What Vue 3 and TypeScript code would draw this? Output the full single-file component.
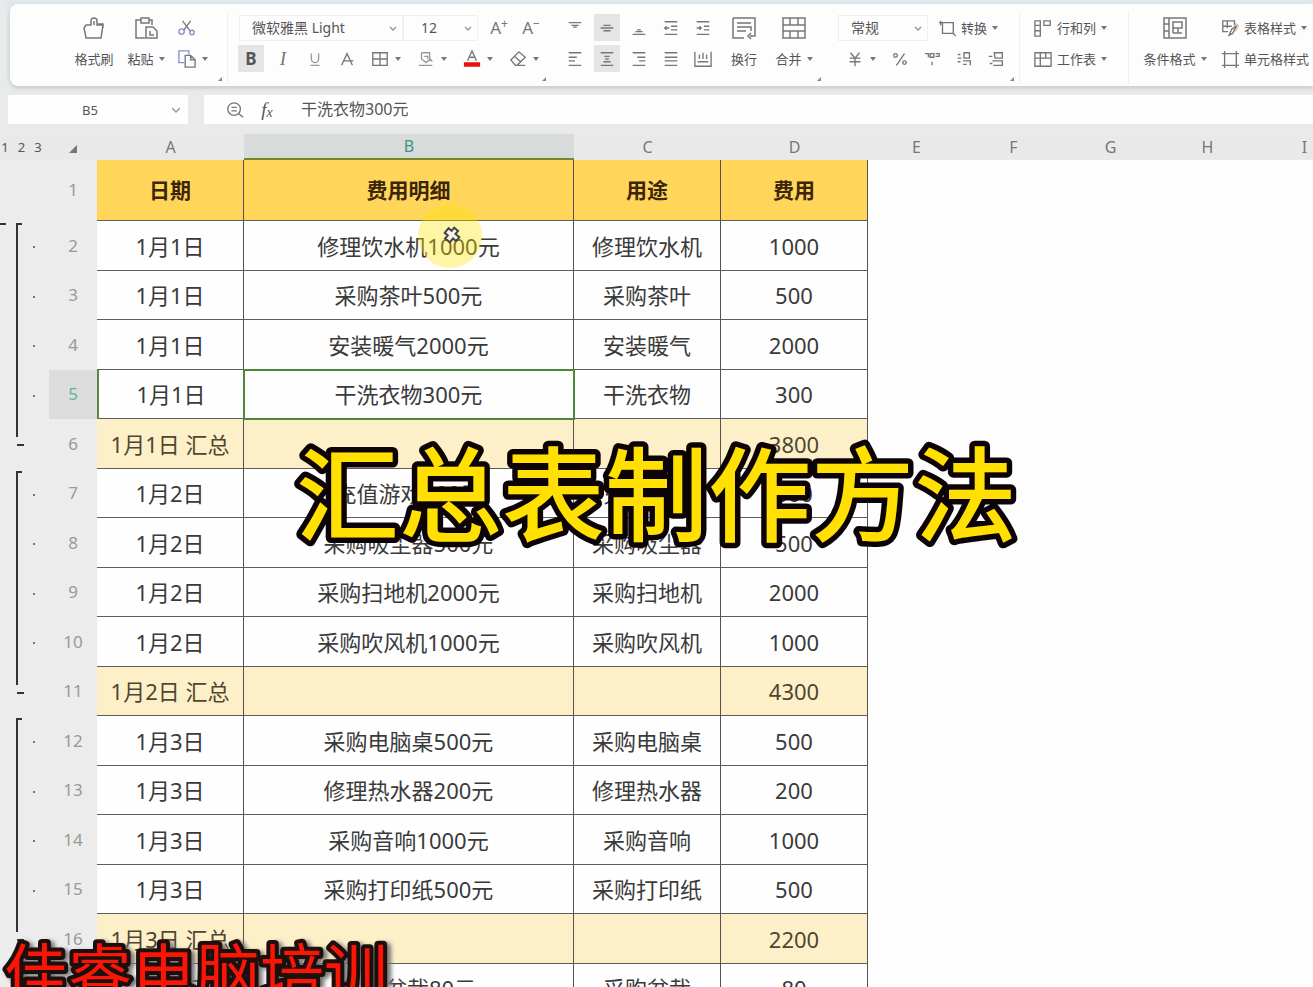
<script setup lang="ts">
import { ref } from 'vue'

type RowKind = 'head' | 'data' | 'total'
type Outline = '' | 'start' | 'mid' | 'end'

interface SheetRow {
  kind: RowKind
  outline: Outline
  cells: [string, string, string, string]
}

const data = (outline: Outline, a: string, b: string, c: string, d: string): SheetRow => ({
  kind: 'data',
  outline,
  cells: [a, b, c, d],
})
const total = (a: string, d: string): SheetRow => ({ kind: 'total', outline: 'end', cells: [a, '', '', d] })

const rows: SheetRow[] = [
  { kind: 'head', outline: '', cells: ['日期', '费用明细', '用途', '费用'] },
  data('start', '1月1日', '修理饮水机1000元', '修理饮水机', '1000'),
  data('mid', '1月1日', '采购茶叶500元', '采购茶叶', '500'),
  data('mid', '1月1日', '安装暖气2000元', '安装暖气', '2000'),
  data('mid', '1月1日', '干洗衣物300元', '干洗衣物', '300'),
  total('1月1日 汇总', '3800'),
  data('start', '1月2日', '充值游戏800元', '充值游戏', '800'),
  data('mid', '1月2日', '采购吸尘器500元', '采购吸尘器', '500'),
  data('mid', '1月2日', '采购扫地机2000元', '采购扫地机', '2000'),
  data('mid', '1月2日', '采购吹风机1000元', '采购吹风机', '1000'),
  total('1月2日 汇总', '4300'),
  data('start', '1月3日', '采购电脑桌500元', '采购电脑桌', '500'),
  data('mid', '1月3日', '修理热水器200元', '修理热水器', '200'),
  data('mid', '1月3日', '采购音响1000元', '采购音响', '1000'),
  data('mid', '1月3日', '采购打印纸500元', '采购打印纸', '500'),
  total('1月3日 汇总', '2200'),
  data('start', '1月4日', '采购盆栽80元', '采购盆栽', '80'),
]

const columns = ['A', 'B', 'C', 'D', 'E', 'F', 'G', 'H', 'I']
const levels = ['1', '2', '3']

const fontName = ref('微软雅黑 Light')
const fontSize = ref('12')
const numberFormat = ref('常规')
const nameBox = ref('B5')
const formula = ref('干洗衣物300元')

const icons: Record<string, string> = {
  underline: 'M6 4v6a4 4 0 0 0 8 0V4M5 17h10',
  strikeA: 'M4 17 10 4l6 13M6 12h11',
  border: 'M2 3h16v14H2zM10 3v14M2 10h16',
  fill: 'M5 3h9v6l3 4M5 3v7l5 4 5-4M8 7h4v3M2 17h15',
  eraser: 'M2 11l9-9 7 6-9 9H7zM6 7l7 6M9 17h9',
  top: 'M3 4h14M6 7h8M8 9h4',
  middle: 'M6 7h8M3 10h14M6 13h8',
  bottom: 'M8 12h4M6 14h8M3 17h14',
  outdent: 'M3 3h14M10 8h7M10 12h7M3 17h14M8 10H3M5 8l-2 2 2 2',
  indent: 'M3 3h14M11 8h6M11 12h6M3 17h14M3 10h5M6 8l2 2-2 2',
  left: 'M3 3h14M3 8h9M3 12h7M3 17h14',
  center: 'M3 3h14M7 7h6M8 10h4M6 13h8M3 17h14',
  right: 'M3 3h14M8 8h9M10 12h7M3 17h14',
  justify: 'M3 3h14M3 8h14M3 12h14M3 17h14',
  spread: 'M1 2v16h18V2M6 5v5M10 3v7M14 5v5M4 13h12',
  percent: 'M15 4 6 17M3 6a2 2 0 1 0 4 0 2 2 0 1 0-4 0M13 14a2 2 0 1 0 4 0 2 2 0 1 0-4 0',
  thousands: 'M2 4h4v4M8 4h4v4H8zM14 4h4v3h-4M10 13v4',
  moreDecimal: 'M3 5h3M3 9h4M10 3h6v6h-6zM3 13h3M9 12h8v5M9 16h4',
  lessDecimal: 'M8 3h9v6H9zM2 7h4M6 12h11v5H7M3 15h3',
  convert: 'M5 4h12v12M17 16H5V4M5 4 1 4M3 2v5M17 16l3 3',
  rowsCols: 'M1 2h6v17H1zM1 7h6M1 13h6M11 2h7v5h-7z',
  sheet: 'M1 3h18v15H1zM7 3v15M1 9h18M13 3v6',
  tableStyle: 'M15 7V2H2v12h6M2 8h10M7 2v8M9 18l3-7 5-3-4 8z',
  cellStyle: 'M4 4h13v13H4zM1 4h3V1M17 1v3h3M1 17h3v3M20 17h-3v3',
}

const hAlign = ['left', 'center', 'right', 'justify', 'spread']
const vAlign = ['top', 'middle', 'bottom', 'outdent', 'indent']
const alignNames: Record<string, string> = {
  left: '左对齐',
  center: '水平居中',
  right: '右对齐',
  justify: '两端对齐',
  spread: '分散对齐',
  top: '顶端对齐',
  middle: '垂直居中',
  bottom: '底端对齐',
  outdent: '减少缩进',
  indent: '增加缩进',
}
</script>

<template>
  <div class="app">
    <header class="ribbon">
      <section class="group clipboard">
        <button class="tall painter">
          <svg class="big" viewBox="0 0 24 24"><path d="M4 9h5V5a3 3 0 0 1 6 0v4h6l-2 13H4L2 12zM12 5v4M16 8h5v4" /></svg>
          <span>格式刷</span>
        </button>
        <button class="tall paste">
          <svg class="big" viewBox="0 0 24 24"><path d="M7 4H2v18h9M15 4h3v5M7 2h8v5H7zM12 11h7l4 4v7H12zM16 15v4h4" /></svg>
          <span>粘贴<i class="caret"></i></span>
        </button>
        <div class="stack">
          <button class="slot start" aria-label="剪切">
            <svg class="icon" viewBox="0 0 20 20"><path d="M5 2l9 12M14 2 6 13" /><path class="blue" d="M1 14a3 3 0 1 0 6 0 3 3 0 1 0-6 0M13 15a2 2 0 1 0 5 0 2 2 0 1 0-5 0" /></svg>
          </button>
          <button class="slot start" aria-label="复制">
            <svg class="icon" viewBox="0 0 20 20"><path class="blue" d="M7 14H1V1h11v4" /><path d="M8 6h6l5 5v8H8zM14 6v5h5" /></svg>
            <i class="caret"></i>
          </button>
        </div>
        <i class="launcher"></i>
      </section>

      <section class="group font">
        <div class="line">
          <label class="pick family">
            <select v-model="fontName" aria-label="字体"><option>微软雅黑 Light</option></select>
            <svg class="chev" viewBox="0 0 8 8"><path d="M1 3l3 3 3-3" /></svg>
          </label>
          <label class="pick size">
            <select v-model="fontSize" aria-label="字号"><option>12</option></select>
            <svg class="chev" viewBox="0 0 8 8"><path d="M1 3l3 3 3-3" /></svg>
          </label>
          <button class="slot letter" aria-label="增大字号">A<sup>+</sup></button>
          <button class="slot letter" aria-label="减小字号">A<sup>−</sup></button>
        </div>
        <div class="line">
          <button class="slot letter on bold">B</button>
          <button class="slot letter italic">I</button>
          <button class="slot" aria-label="下划线"><svg class="icon faint" viewBox="0 0 20 20"><path :d="icons.underline" /></svg></button>
          <button class="slot" aria-label="删除线"><svg class="icon" viewBox="0 0 20 20"><path :d="icons.strikeA" /></svg></button>
          <button class="slot wide" aria-label="边框"><svg class="icon" viewBox="0 0 20 20"><path :d="icons.border" /></svg><i class="caret"></i></button>
          <button class="slot wide" aria-label="填充颜色"><svg class="icon faint" viewBox="0 0 20 20"><path :d="icons.fill" /></svg><i class="caret"></i></button>
          <button class="slot wide" aria-label="字体颜色">
            <svg class="icon" viewBox="0 0 20 20"><path d="M5 12l5-11 5 11M7 8h6" /><path class="red" d="M1 16h18" /></svg>
            <i class="caret"></i>
          </button>
          <button class="slot wide" aria-label="清除"><svg class="icon" viewBox="0 0 20 20"><path :d="icons.eraser" /></svg><i class="caret"></i></button>
        </div>
        <i class="launcher"></i>
      </section>

      <section class="group align">
        <div class="stack">
          <div class="line">
            <button v-for="n in vAlign" :key="n" class="slot" :class="{ on: n === 'middle' }" :aria-label="alignNames[n]">
              <svg class="icon" viewBox="0 0 20 20"><path :d="icons[n]" /></svg>
            </button>
          </div>
          <div class="line">
            <button v-for="n in hAlign" :key="n" class="slot" :class="{ on: n === 'center' }" :aria-label="alignNames[n]">
              <svg class="icon" viewBox="0 0 20 20"><path :d="icons[n]" /></svg>
            </button>
          </div>
        </div>
        <button class="tall mid">
          <svg class="big" viewBox="0 0 24 24"><path d="M1 2h22v18h-5M12 22H1V2M5 7h14M5 11h14v4M5 15h9M19 17l-3 3 3 3" /></svg>
          <span>换行</span>
        </button>
        <button class="tall mid">
          <svg class="big" viewBox="0 0 24 24"><path d="M1 2h22v20H1zM1 9h22M1 15h22M8 2v7M16 2v7M8 15v7M16 15v7" /></svg>
          <span>合并<i class="caret"></i></span>
        </button>
        <i class="launcher"></i>
      </section>

      <section class="group number">
        <div class="line">
          <label class="pick format">
            <select v-model="numberFormat" aria-label="数字格式"><option>常规</option></select>
            <svg class="chev" viewBox="0 0 8 8"><path d="M1 3l3 3 3-3" /></svg>
          </label>
          <button class="text"><svg class="icon" viewBox="0 0 20 20"><path :d="icons.convert" /></svg>转换<i class="caret"></i></button>
        </div>
        <div class="line">
          <button class="slot wide" aria-label="货币"><svg class="icon" viewBox="0 0 20 20"><path d="M5 3l5 6 5-6M4 9h12M4 13h12M10 9v9" /></svg><i class="caret"></i></button>
          <button class="slot" aria-label="百分比"><svg class="icon" viewBox="0 0 20 20"><path :d="icons.percent" /></svg></button>
          <button class="slot" aria-label="千位分隔"><svg class="icon" viewBox="0 0 20 20"><path :d="icons.thousands" /></svg></button>
          <button class="slot" aria-label="增加小数位"><svg class="icon" viewBox="0 0 20 20"><path :d="icons.moreDecimal" /></svg></button>
          <button class="slot" aria-label="减少小数位"><svg class="icon" viewBox="0 0 20 20"><path :d="icons.lessDecimal" /></svg></button>
        </div>
        <i class="launcher"></i>
      </section>

      <section class="group cells">
        <button class="text"><svg class="icon" viewBox="0 0 20 20"><path :d="icons.rowsCols" /></svg>行和列<i class="caret"></i></button>
        <button class="text"><svg class="icon" viewBox="0 0 20 20"><path :d="icons.sheet" /></svg>工作表<i class="caret"></i></button>
      </section>

      <section class="group styles">
        <button class="tall cond">
          <svg class="big" viewBox="0 0 24 24"><path d="M1 2h22v20H1zM6 2v20M1 8h5M1 15h5M10 6h9v6h-9zM10 17h9M10 12v5M15 12v5" /></svg>
          <span>条件格式<i class="caret"></i></span>
        </button>
        <div class="stack">
          <button class="text"><svg class="icon" viewBox="0 0 20 20"><path class="peach" d="M14 13l5-7" /><path :d="icons.tableStyle" /></svg>表格样式<i class="caret"></i></button>
          <button class="text"><svg class="icon" viewBox="0 0 20 20"><path :d="icons.cellStyle" /></svg>单元格样式</button>
        </div>
      </section>
    </header>

    <div class="bar">
      <label class="name">
        <input v-model="nameBox" aria-label="名称框" />
        <svg class="chev" viewBox="0 0 8 8"><path d="M0 2l4 4 4-4" /></svg>
      </label>
      <div class="formula">
        <button class="slot" aria-label="查找"><svg class="icon" viewBox="0 0 20 20"><path d="M2 9a7 7 0 1 0 14 0A7 7 0 1 0 2 9M14 14l5 4M6 7h6M6 11h6" /></svg></button>
        <button class="slot fx" aria-label="插入函数">f<sub>x</sub></button>
        <input v-model="formula" aria-label="编辑栏" />
      </div>
    </div>

    <main class="canvas">
      <table class="sheet">
        <colgroup>
          <col class="w-outline" /><col class="w-num" /><col class="w-a" /><col class="w-b" /><col class="w-c" /><col class="w-d" />
          <col v-for="n in 5" :key="n" class="w-rest" />
        </colgroup>
        <thead>
          <tr>
            <th class="levels"><div><button v-for="l in levels" :key="l">{{ l }}</button></div></th>
            <th class="corner"><svg viewBox="0 0 8 8"><path d="M8 0v8H0z" /></svg></th>
            <th v-for="c in columns" :key="c" scope="col" :class="{ picked: c === 'B' }">{{ c }}</th>
          </tr>
        </thead>
        <tbody>
          <tr v-for="(row, i) in rows" :key="i" :class="[row.kind, { active: i === 4 }]">
            <td class="outline" :class="[row.outline, { first: i === 1 }]"></td>
            <th scope="row" class="num">{{ i + 1 }}</th>
            <td v-for="(cell, j) in row.cells" :key="j" class="cell" :class="{ selected: i === 4 && j === 1 }">{{ cell }}</td>
            <td v-for="n in 5" :key="'e' + n" class="empty"></td>
          </tr>
        </tbody>
      </table>
      <svg class="pointer" viewBox="0 0 64 64">
        <circle cx="32" cy="32" r="32" />
        <path d="M31 24h5v4h5v5h-4v5h-6v-4h-4v-6h4z" />
      </svg>
    </main>

    <svg class="caption" role="heading" aria-level="1">
      <text x="50%" y="114" text-anchor="middle">汇总表制作方法</text>
    </svg>
    <svg class="brand">
      <text x="4" y="70">佳睿电脑培训</text>
    </svg>
  </div>
</template>

<style>
body {
  margin: 0;
  background: #fff;
}
</style>

<style scoped>
* {
  box-sizing: border-box;
}
.app {
  position: relative;
  height: 100vh;
  overflow: hidden;
  display: flex;
  flex-direction: column;
  background: #e9ebeb;
  color: #555;
  font-family: "Noto Sans", "Noto Sans CJK SC", sans-serif;
  font-size: 13px;
}
button,
input,
select {
  font: inherit;
  color: inherit;
  border: 0;
  background: none;
  padding: 0;
  margin: 0;
}
svg {
  fill: none;
  stroke: #777;
  stroke-width: 1.5;
  flex: none;
}
.ribbon {
  flex: none;
  display: flex;
  height: 82px;
  margin: 4px 0 0 10px;
  padding: 8px 0 0 60px;
  background: #fefdfe;
  border-radius: 8px 0 0 8px;
  box-shadow: 0 2px 4px #c4c8c8, 0 -4px 0 4px #dfe9ed;
  overflow: hidden;
  white-space: nowrap;
}
.group {
  position: relative;
  flex: none;
  height: 72px;
}
.clipboard {
  display: flex;
  width: 158px;
  margin-right: 7px;
  border-right: 1px solid #f1f1f3;
}
.font {
  width: 316px;
  margin-right: 8px;
}
.align {
  display: flex;
  width: 267px;
  margin-right: 12px;
}
.number {
  width: 182px;
  margin-right: 14px;
  border-right: 1px solid #f1f1f3;
}
.cells {
  width: 95px;
  margin-right: 12px;
  border-right: 1px solid #f1f1f3;
}
.styles {
  display: flex;
  gap: 12px;
}
.line {
  display: flex;
  align-items: center;
  height: 31px;
}
.stack {
  display: flex;
  flex-direction: column;
}
.slot {
  display: flex;
  align-items: center;
  justify-content: center;
  gap: 6px;
  width: 32px;
  height: 31px;
}
.slot.wide {
  width: 46px;
}
.slot.start {
  width: 44px;
  justify-content: flex-start;
  padding-left: 4px;
}
.on {
  background: #e6e5e6;
  background-clip: content-box;
  padding: 2px 3px;
}
.tall {
  display: flex;
  flex-direction: column;
  align-items: center;
  height: 62px;
}
.tall .big {
  margin: 4px 0 3px;
}
.tall span,
.text {
  display: flex;
  align-items: center;
  gap: 5px;
  height: 31px;
}
.painter {
  width: 48px;
}
.paste {
  width: 56px;
}
.mid {
  width: 50px;
}
.cond {
  width: 68px;
}
.icon {
  width: 18px;
  height: 18px;
}
.big {
  width: 24px;
  height: 24px;
}
.faint {
  stroke: #999;
}
.blue {
  stroke: #8a8fd0;
}
.red {
  stroke: #e8110c;
  stroke-width: 5;
}
.peach {
  stroke: #f6d3bd;
  stroke-width: 6;
}
.caret {
  border: 3px solid transparent;
  border-top: 4px solid #777;
  border-bottom: 0;
}
.launcher {
  position: absolute;
  right: 5px;
  bottom: 3px;
  border: 2px solid #888;
  border-top-color: transparent;
  border-left-color: transparent;
}
.letter {
  font-size: 17px;
  color: #777;
}
.letter sup {
  font-size: 12px;
  margin: -8px 0 0 -6px;
}
.bold {
  font-weight: 700;
  color: #555;
}
.italic {
  font-family: "Liberation Serif", serif;
  font-style: italic;
  font-size: 19px;
}
.pick {
  position: relative;
  display: flex;
  align-items: center;
  height: 26px;
  border: 1px solid #efeef0;
}
.pick select {
  appearance: none;
  width: 100%;
  height: 100%;
  padding-left: 12px;
  font-size: 14px;
}
.pick .chev {
  position: absolute;
  right: 5px;
}
.chev {
  width: 8px;
  height: 8px;
  stroke: #999;
  pointer-events: none;
}
.family {
  width: 164px;
  margin-left: 4px;
}
.size {
  width: 75px;
  margin-right: 5px;
}
.size select {
  padding-left: 17px;
}
.format {
  width: 90px;
  margin-right: 10px;
}
.bar {
  flex: none;
  display: flex;
  gap: 16px;
  height: 29px;
  margin: 9px 0 10px 8px;
}
.name,
.formula {
  display: flex;
  align-items: center;
  background: #fefefe;
}
.name {
  width: 180px;
  padding-right: 8px;
}
.name input {
  flex: 1;
  min-width: 0;
  text-align: center;
}
.formula {
  flex: 1;
  padding-left: 15px;
}
.formula input {
  flex: 1;
  margin-left: 18px;
  padding-bottom: 4px;
  font-size: 16px;
}
.fx {
  gap: 0;
  font-family: "Liberation Serif", serif;
  font-style: italic;
  font-size: 19px;
}
.fx sub {
  font-size: 14px;
  margin-top: 6px;
}
.canvas {
  position: relative;
  flex: 1;
  min-height: 0;
  overflow: hidden;
  background: #fdfdfd;
}
.sheet {
  table-layout: fixed;
  width: 1353px;
  border-collapse: separate;
  border-spacing: 0;
}
.w-outline {
  width: 49px;
}
.w-num {
  width: 48px;
}
.w-a,
.w-c,
.w-d {
  width: 147px;
}
.w-b {
  width: 330px;
}
.w-rest {
  width: 97px;
}
.sheet th,
.sheet td {
  padding: 0;
}
thead th {
  height: 26px;
  background: #e9e9e9;
  font-size: 16px;
  font-weight: 400;
  line-height: 24px;
  color: #777;
}
thead .picked {
  background: #d9dada;
  color: #3a9484;
  border-bottom: 2px solid #6f8a2c;
}
.levels div {
  display: flex;
  justify-content: space-between;
  padding-right: 6px;
}
.levels button {
  width: 10px;
  font-size: 13px;
  line-height: 24px;
  color: #555;
}
.corner svg {
  width: 8px;
  height: 8px;
  fill: #777;
  stroke: none;
}
tbody tr {
  height: 49px;
}
tbody tr:nth-child(even) {
  height: 50px;
}
tbody tr.head {
  height: 61px;
}
.outline,
.num {
  background-color: #ececec;
}
.sheet .num {
  padding-bottom: 2px;
  font-size: 17px;
  font-weight: 400;
  color: #999;
}
.sheet .active .num {
  background: #dcdcdc;
  color: #5cb5a4;
}
.outline {
  background-repeat: no-repeat;
}
.outline.start {
  background-image: linear-gradient(#333, #333), linear-gradient(#333, #333), linear-gradient(#777, #777);
  background-size: 2px 100%, 6px 2px, 2px 2px;
  background-position: 16px 2px, 16px 2px, 33px 25px;
}
.outline.start.first {
  background-image: linear-gradient(#333, #333), linear-gradient(#333, #333), linear-gradient(#777, #777), linear-gradient(#333, #333);
  background-size: 2px 100%, 6px 2px, 2px 2px, 6px 2px;
  background-position: 16px 2px, 16px 2px, 33px 25px, 0 2px;
}
.outline.mid {
  background-image: linear-gradient(#333, #333), linear-gradient(#777, #777);
  background-size: 2px 100%, 2px 2px;
  background-position: 16px 0, 33px 25px;
}
.outline.end {
  background-image: linear-gradient(#333, #333), linear-gradient(#333, #333);
  background-size: 2px 18px, 7px 2px;
  background-position: 16px 0, 17px 25px;
}
.cell {
  background: #fefefe;
  border-right: 1px solid #5a5252;
  border-bottom: 1px solid #5f5c5c;
  text-align: center;
  font-size: 22px;
  line-height: 30px;
  color: #3a3a3a;
  white-space: nowrap;
}
.head .cell {
  background: #ffd659;
  color: #3c2508;
  font-size: 21px;
  font-weight: 700;
}
.total .cell {
  background: #fdf0c8;
  color: #4e4630;
}
.active .cell:nth-child(3) {
  border-left: 2px solid #5b8a48;
}
.active .selected {
  outline: 2px solid #4c8838;
  outline-offset: -1px;
}
.pointer {
  position: absolute;
  left: 418px;
  top: 70px;
  width: 64px;
  height: 64px;
}
.pointer circle {
  fill: #ffe600;
  fill-opacity: 0.35;
  stroke: none;
}
.pointer path {
  fill: #f4f2ea;
  stroke: #444;
  stroke-width: 2;
  transform: rotate(40deg);
  transform-origin: 34px 31px;
}
.caption,
.brand {
  position: absolute;
  left: 0;
  font-family: "Noto Sans CJK SC", sans-serif;
  paint-order: stroke fill;
  stroke-linejoin: round;
  pointer-events: none;
}
.caption {
  top: 420px;
  width: 100%;
  height: 150px;
  font-size: 103px;
  font-weight: 500;
  fill: #ffe000;
  stroke: #0c0306;
  stroke-width: 11px;
}
.brand {
  bottom: 0;
  width: 420px;
  height: 60px;
  font-size: 64px;
  font-weight: 400;
  fill: #fb1507;
  stroke: #1d0f0b;
  stroke-width: 8px;
  filter: drop-shadow(4px 2px 2px #777);
}
</style>
